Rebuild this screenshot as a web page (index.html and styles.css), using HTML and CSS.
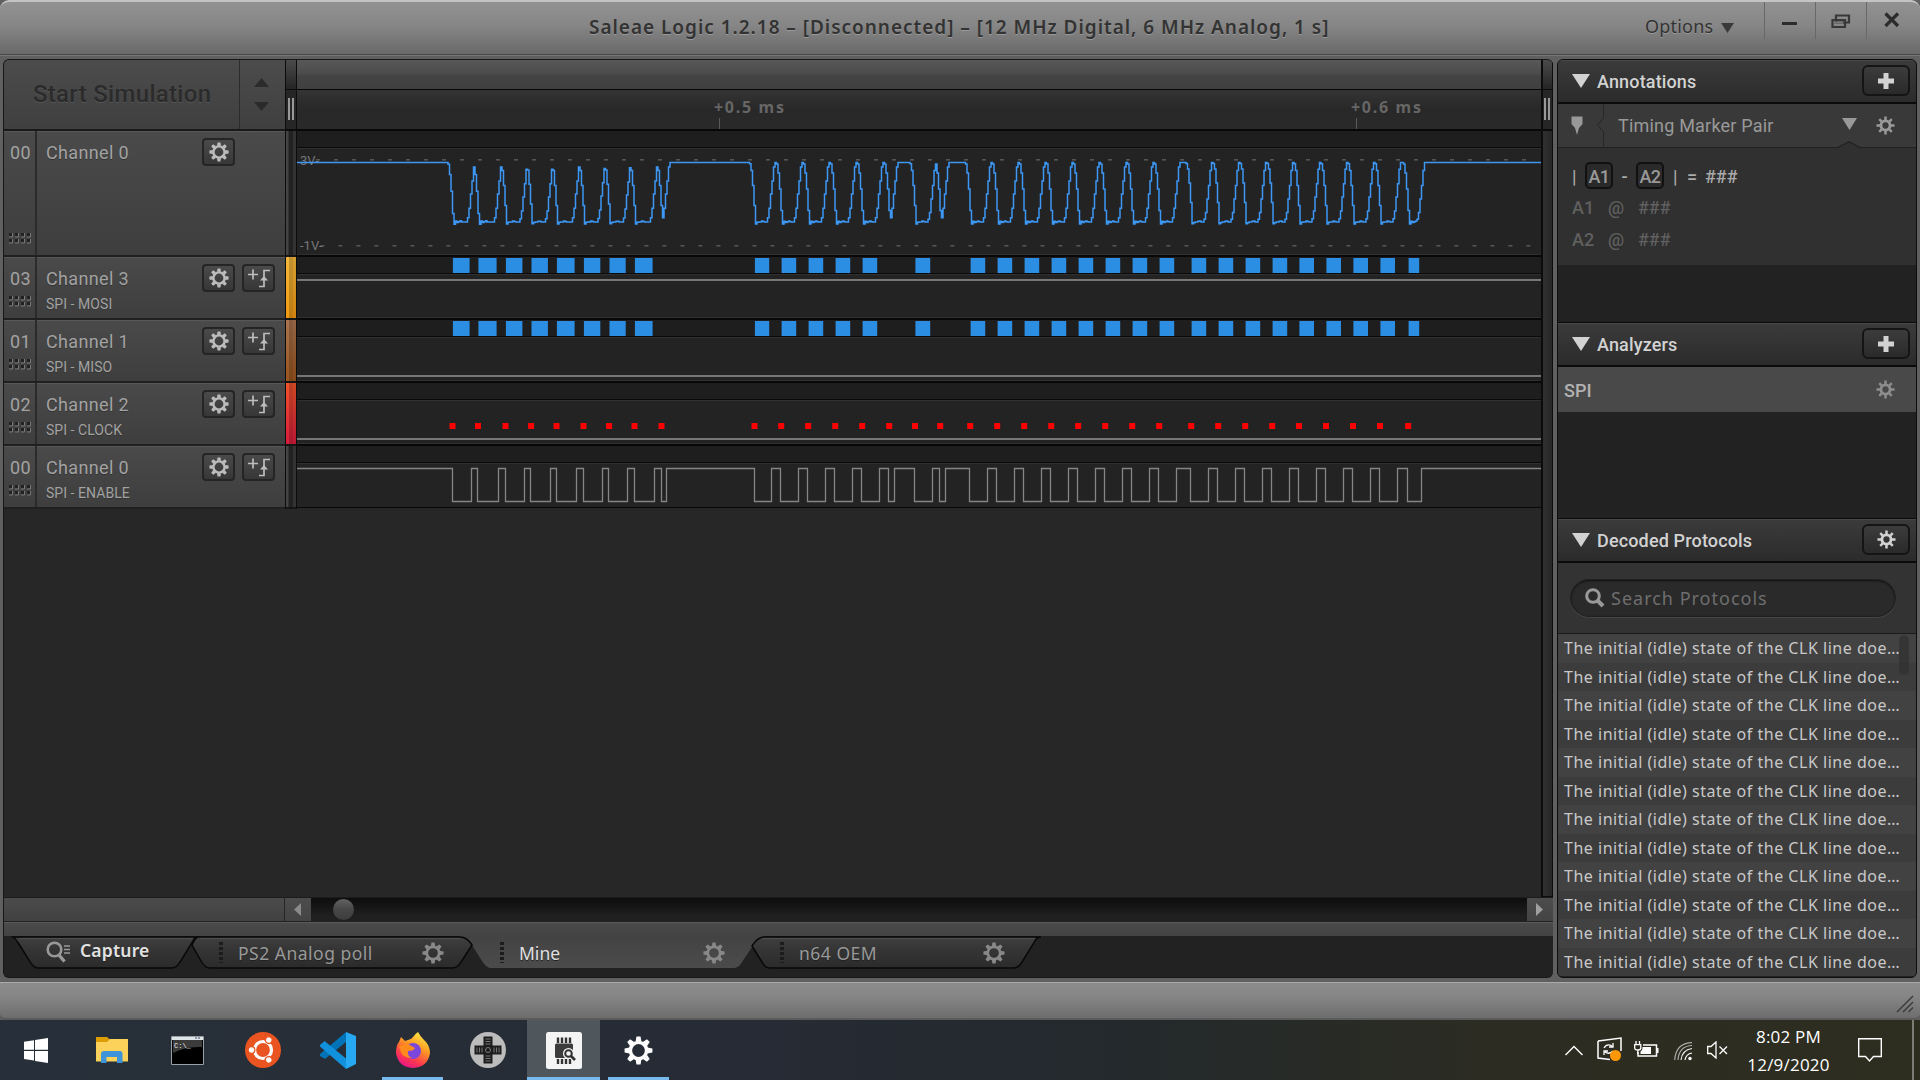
FILE: index.html
```html
<!DOCTYPE html>
<html lang="en">
<head>
<meta charset="utf-8">
<title>Saleae Logic 1.2.18</title>
<link rel="stylesheet" href="styles.css">
</head>
<body>
<svg class="defs" width="0" height="0">
  <defs>
    <symbol id="gear" viewBox="-10 -10 20 20">
      <circle r="5.6" fill="none" stroke="currentColor" stroke-width="2.4"/>
      <g fill="currentColor">
        <path id="tooth" d="M-2-6.2L-1.4-9.6H1.4L2-6.2Z"/>
        <use href="#tooth" transform="rotate(45)"/><use href="#tooth" transform="rotate(90)"/>
        <use href="#tooth" transform="rotate(135)"/><use href="#tooth" transform="rotate(180)"/>
        <use href="#tooth" transform="rotate(225)"/><use href="#tooth" transform="rotate(270)"/>
        <use href="#tooth" transform="rotate(315)"/>
      </g>
    </symbol>
    <symbol id="cog" viewBox="-10 -10 20 20">
      <circle r="4.8" fill="none" stroke="currentColor" stroke-width="3"/>
      <g stroke="currentColor" stroke-width="2.6"><path d="M0-9.5V-5M0 9.5V5M-9.5 0H-5M9.5 0H5M-6.6-6.6L-4-4M6.6-6.6L4-4M-6.6 6.6L-4 4M6.6 6.6L4 4"/></g>
    </symbol>
    <symbol id="trigger" viewBox="0 0 24 20">
      <path d="M1 6.5H11M6 1.5V11.500M12 18.500H17V2.500H23" fill="none" stroke="currentColor" stroke-width="1.700"/>
      <path d="M13 12.500L17 8L21 12.500Z" fill="currentColor"/>
    </symbol>
    <symbol id="plus" viewBox="0 0 18 18"><path d="M6.500 1H11.500V6.500H17V11.500H11.500V17H6.500V11.500H1V6.500H6.500Z" fill="currentColor"/></symbol>
    <symbol id="down" viewBox="0 0 18 14"><path d="M0 0H18L9 14Z" fill="currentColor"/></symbol>
  </defs>
</svg>

<header class="titlebar">
  <h1 class="title">Saleae Logic 1.2.18 – [Disconnected] – [12 MHz Digital, 6 MHz Analog, 1 s]</h1>
  <div class="options">Options <svg width="13" height="9"><use href="#down"/></svg></div>
  <div class="winbtn"><svg width="16" height="24"><path d="M0 19.500H15" stroke="#2c2c2c" stroke-width="3"/></svg></div>
  <div class="winbtn"><svg width="20" height="18"><path d="M5 1.500H18V8.500H5ZM1.500 6H14V13H1.500Z" fill="none" stroke="#383838" stroke-width="2.200"/><path d="M3 8.500H12" stroke="#777" stroke-width="2"/></svg></div>
  <div class="winbtn"><svg width="16" height="16"><path d="M1.500 1.500L14 14M14 1.500L1.500 14" stroke="#2c2c2c" stroke-width="3.200"/></svg></div>
</header>

<main class="workspace">
  <section class="capture">
    <div class="scope">
      <aside class="channels">
        <div class="start">
          <div class="start-label">Start Simulation</div>
          <div class="spin">
            <svg width="15" height="41"><path d="M0 9L7.500 0L15 9ZM0 24H15L7.500 33Z" fill="#2b2b2b"/></svg>
          </div>
        </div>
        <div id="channels"></div>
      </aside>
      <div class="splitter">
        <i class="cap"></i><i class="grip"></i><i class="bar tall"></i>
        <i class="bar c3"></i><i class="bar c1"></i><i class="bar c2"></i><i class="bar c0"></i>
      </div>
      <div class="plot">
        <div class="overview"></div>
        <div class="ruler"><span>+0.5 ms</span><span>+0.6 ms</span></div>
        <div id="lanes"></div>
      </div>
      <div class="vscroll"><i class="cap"></i><i class="grip"></i><i class="rest"></i></div>
    </div>
    <div class="hscroll">
      <div class="hs-left"></div>
      <div class="hs-btn"><svg width="8" height="14"><path d="M7 0V13L0 6.500Z" fill="#8a8a8a"/></svg></div>
      <div class="hs-track"><i></i></div>
      <div class="hs-btn right"><svg width="8" height="14"><path d="M0 0V13L7 6.500Z" fill="#a0a0a0"/></svg></div>
    </div>
    <div class="shelf"></div>
    <nav class="tabs">
      <svg class="tab-shapes" viewBox="4 936 1549 41" width="1549" height="41">
        <defs>
          <linearGradient id="tabfill" x1="0" y1="0" x2="0" y2="1"><stop offset="0" stop-color="#3f3f3f"/><stop offset=".4" stop-color="#353535"/><stop offset="1" stop-color="#2b2b2b"/></linearGradient>
          <linearGradient id="activefill" x1="0" y1="0" x2="0" y2="1"><stop offset="0" stop-color="#434343"/><stop offset="1" stop-color="#4b4b4b"/></linearGradient>
        </defs>
        <path d="M458 936H766Q758 938 754 944L742 962Q739 968 733 968H490Q486 967 482 961L472 945Q467 937 458 936Z" fill="url(#activefill)"/>
        <g stroke="#080808" stroke-width="1.500" fill="url(#tabfill)">
          <path d="M13 937Q16 939 19 944L29 960Q33 968 38 968H171Q177 968 180 962L193 941Q195 937 198 937Z"/>
          <path d="M198 937Q195 938 192 945L201 961Q205 968 210 968H452Q458 968 461 962L472 945Q467 937 460 937Z"/>
          <path d="M763 937Q757 938 752 946L762 962Q765 968 770 968H1013Q1019 968 1022 962L1035 941Q1037 937 1041 937Z"/>
        </g>
        <path d="M20 938.500H192M200 938.500H460M763 938.500H1034" stroke="#505050"/>
      </svg>
      <div class="tab first"><svg width="26" height="22"><circle cx="8.500" cy="8.500" r="6.800" fill="none" stroke="#999" stroke-width="2.600"/><path d="M12.500 13.500L18.500 20.500" stroke="#999" stroke-width="3.400"/><path d="M18 5H24M18 8.500H24M18 12H24" stroke="#999" stroke-width="1.300"/></svg><b>Capture</b></div>
      <div class="tab ps2"><i class="dots"></i><span>PS2 Analog poll</span><svg width="22" height="22"><use href="#gear"/></svg></div>
      <div class="tab mine"><i class="dots"></i><span>Mine</span><svg width="22" height="22"><use href="#gear"/></svg></div>
      <div class="tab n64"><i class="dots"></i><span>n64 OEM</span><svg width="22" height="22"><use href="#gear"/></svg></div>
    </nav>
  </section>

  <aside class="side">
    <div class="head"><svg width="18" height="14"><use href="#down"/></svg><h2>Annotations</h2><div class="btn"><svg width="18" height="18"><use href="#plus"/></svg></div></div>
    <div class="marker-bar">
      <svg width="54" height="43"><path d="M13.500 12.500H24.500V20L21 24L19 31L17 24L13.500 20Z" fill="#999"/><path d="M45.500 0V14L39.500 21L45.500 28V43" fill="none" stroke="#272727"/></svg>
      <span>Timing Marker Pair</span>
      <svg class="mtri" width="15" height="12" viewBox="0 0 18 14" preserveAspectRatio="none"><use href="#down"/></svg>
      <svg class="mcog" width="19" height="19"><use href="#cog"/></svg>
    </div>
    <div class="marker-body">
      <svg class="notch" width="24" height="8"><path d="M0 7.500L12 .5L24 7.500V8H0Z" fill="#303030"/><path d="M0 7L12 .8L24 7" fill="none" stroke="#222" stroke-width="1.200"/></svg>
      <p class="delta"><span>|</span><kbd>A1</kbd><span>-</span><kbd>A2</kbd><span>|</span><span class="eq">=</span><span>###</span></p>
      <p class="pos"><span>A1</span><span>@</span><span>###</span></p>
      <p class="pos"><span>A2</span><span>@</span><span>###</span></p>
    </div>
    <div class="void"></div>
    <div class="head"><svg width="18" height="14"><use href="#down"/></svg><h2>Analyzers</h2><div class="btn"><svg width="18" height="18"><use href="#plus"/></svg></div></div>
    <div class="spi"><span>SPI</span><svg width="19" height="19"><use href="#cog"/></svg></div>
    <div class="void two"></div>
    <div class="head"><svg width="18" height="14"><use href="#down"/></svg><h2>Decoded Protocols</h2><div class="btn"><svg width="19" height="19"><use href="#cog"/></svg></div></div>
    <div class="search"><div class="pill"><svg width="20" height="20"><circle cx="8" cy="8" r="6.300" fill="none" stroke="#999" stroke-width="3"/><path d="M12.500 12.500L18 18" stroke="#999" stroke-width="4"/></svg>Search Protocols</div></div>
    <div class="list"><ul id="protocols"></ul><i class="thumb"></i></div>
  </aside>
</main>

<footer class="status"><svg width="18" height="18"><path d="M1 17L17 1M7 17L17 7M12.500 17L17 12.500" stroke="#3c3c3c" stroke-width="1.500"/></svg></footer>

<div class="taskbar">
  <div class="app start-app"><svg width="24" height="25"><path d="M0 3.700L10 2.200V11.700H0ZM11 2L24 0V11.700H11ZM0 13H10V22.500L0 21ZM11 13H24V25L11 23Z" fill="#fff"/></svg></div>
  <div class="app"><svg width="33" height="28"><path d="M0 1H11L14 3.500V8H0Z" fill="#dd9d05"/><path d="M0 6H11L14 3H32V25.500H0Z" fill="#fcd25a"/><path d="M5 27V18Q5 15 8 15H24Q26.500 15 26.500 18V27H21V21H10.500V27Z" fill="#3d94d8"/></svg></div>
  <div class="app"><svg width="33" height="29"><path d="M.5.500H32.500V28.500H.5Z" fill="#000" stroke="#98a0a5"/><path d="M1 1H32V4H1Z" fill="#dfe6ea"/><path d="M2 4H31V11Q15 10 2 17Z" fill="#3b3b3b"/><path d="M24 2H26M27 2H29" stroke="#446"/><text x="3" y="11.500" class="cmd">C:\_</text></svg></div>
  <div class="app"><svg width="36" height="36" viewBox="-18 -18 36 36"><circle r="18" fill="#e95420"/><circle r="8.500" fill="none" stroke="#fff" stroke-width="3.200"/><g id="friend"><circle cx="-11.500" r="4" fill="#e95420"/><circle cx="-11.500" r="2.700" fill="#fff"/></g><use href="#friend" transform="rotate(120)"/><use href="#friend" transform="rotate(240)"/></svg></div>
  <div class="app"><svg width="36" height="37"><path d="M26 0L36 4V32L26 37Z" fill="#27a9f1"/><path d="M26 0V10L5 27L0 24V22Z" fill="#0072b8"/><path d="M0 13L4.500 9L26 26.500V37L0 14.500Z" fill="#1190dc"/></svg></div>
  <div class="app run"><svg width="36" height="37" viewBox="0 0 36 37">
    <defs><linearGradient id="fox" x1=".8" y1="0" x2=".3" y2="1"><stop offset="0" stop-color="#fff14b"/><stop offset=".4" stop-color="#ff9a22"/><stop offset=".75" stop-color="#ff3750"/><stop offset="1" stop-color="#e2158b"/></linearGradient></defs>
    <path d="M6 5L10 9L13 8Q17 7 18 5Q20 2 23 0Q25 4 29 8L31 10Q35 15 35 21Q33 35 18 36Q3 35 1 21Q1 13 4 10Z" fill="url(#fox)"/><circle cx="18" cy="19" r="8" fill="#7a46dc"/><path d="M4 15Q6 12 13 12L20 16Q19 19 13 19Q12 24 17 26Q6 26 5 17Z" fill="#ff8b1d"/></svg></div>
  <div class="app"><svg width="36" height="36" viewBox="-18 -18 36 36"><circle r="18" fill="#bcbcbc"/><path d="M-4.500-13.500H4.500V-4.500H13.500V4.500H4.500V13.500H-4.500V4.500H-13.500V-4.500H-4.500Z" fill="#1d1d1d"/><path d="M-2.500-11H2.500M-2.500-8.500H2.500M-2.500-6H2.500M-2.500 11H2.500M-2.500 8.500H2.500M-2.500 6H2.500M-11-2.500V2.500M-8.500-2.500V2.500M-6-2.500V2.500M11-2.500V2.500M8.500-2.500V2.500M6-2.500V2.500" stroke="#777"/><circle r="2.500" fill="none" stroke="#777"/></svg></div>
  <div class="app run on"><svg width="36" height="37"><rect width="36" height="37" rx="2.500" fill="#f4f4f4"/><path d="M12 5.500V11M16 5.500V11M20 5.500V11M24 5.500V11M12 27V32M16 27V32M20 27V32M24 27V32" stroke="#333" stroke-width="2.400"/><rect x="9" y="11.500" width="18" height="14.500" rx="1.500" fill="#3c3c3c"/><circle cx="22.500" cy="21.500" r="5.500" fill="#f4f4f4"/><path d="M25 24L29 28" stroke="#f4f4f4" stroke-width="5"/><circle cx="22.500" cy="21.500" r="3.300" fill="#f4f4f4" stroke="#333" stroke-width="2"/><path d="M25 24L29 28" stroke="#333" stroke-width="2.600"/></svg></div>
  <div class="app run last"><svg width="29" height="29"><use href="#gear"/></svg></div>
  <div class="tray">
    <svg width="18" height="11"><path d="M.5 10L9 1.500L17.500 10" fill="none" stroke="#fff" stroke-width="1.400"/></svg>
    <svg class="upd" width="26" height="26"><path d="M1 4L24 1V14M1 4V21L13 22.500" fill="none" stroke="#fff" stroke-width="1.500"/><path d="M7 11Q10 6 15 9M16 6V10H12M16 14Q12 18 8 15M7 18V14H11" fill="none" stroke="#fff" stroke-width="1.300"/><circle cx="18.500" cy="18.500" r="5.500" fill="#ff9800"/></svg>
    <svg class="bat" width="25" height="18"><path d="M9 4H22.500V15H4V11" fill="none" stroke="#fff" stroke-width="1.500"/><path d="M8.500 6H17V13H6.500V10.500Q8.500 9.500 8.500 7ZM23 7H24.500V12H23Z" fill="#fff"/><path d="M2 0V4M5.500 0V4M.7 3.700H6.800V7Q6.800 9 3.800 9Q.7 9 .7 7ZM3.800 9V13" stroke="#fff" stroke-width="1.300" fill="none"/></svg>
    <svg class="wifi" width="19" height="19"><g fill="none" stroke="#fff" stroke-width="1.200"><path d="M11 18Q12 12 18 11"/><path d="M7 18Q8 8 18 6.500" opacity=".9"/><path d="M4 18Q5 4 18 3.500" opacity=".6"/><path d="M.7 18Q2 1 18 .7" opacity=".6"/></g><circle cx="16" cy="16.500" r="1.700" fill="#fff"/></svg>
    <svg class="snd" width="22" height="18"><path d="M.7 5.500H4L9 1V17L4 12.500H.7ZM12.500 5.500L20 13M20 5.500L12.500 13" fill="none" stroke="#fff" stroke-width="1.300"/></svg>
    <div class="clock"><span>8:02 PM</span><span>12/9/2020</span></div>
    <svg class="note" width="24" height="25"><path d="M.7.700H23.300V18.500H15.500L11.500 23L7.500 18.500H.7Z" fill="none" stroke="#fff" stroke-width="1.400"/></svg>
    <i class="peek"></i>
  </div>
</div>
<script src="app.js"></script>
</body>
</html>
```
FILE: styles.css
```css
* { box-sizing: border-box; }
body { margin: 0; width: 1920px; height: 1080px; overflow: hidden; display: flex; flex-direction: column; background: #606060; font-family: Roboto, "Liberation Sans", sans-serif; color: #a2a2a2; }
h1, h2, p, ul { margin: 0; padding: 0; font-weight: 500; list-style: none; }
svg { display: block; flex: none; }
.defs { position: absolute; }

.titlebar { height: 55px; flex: none; display: flex; border-top: 2px solid #c4c4c4; border-bottom: 1px solid #484848; border-radius: 9px 9px 0 0; background: linear-gradient(#929293, #868686 45%, #696969); }
.title { width: 1634px; flex: none; padding: 13px 0 0 589px; font: 600 19px/24px "Noto Sans", sans-serif; color: #333; white-space: nowrap; letter-spacing: .97px; text-shadow: 0 1px #999; }
.options { width: 130px; padding-top: 12px; padding-left: 11px; display: flex; gap: 8px; font: 18px/24px "Noto Sans", sans-serif; letter-spacing: .2px; color: #333; white-space: nowrap; text-shadow: 0 1px #999; }
.options svg { margin-top: 9px; color: #3a3a3a; width: 13px; height: 10px; }
.winbtn { width: 51px; height: 37px; border-left: 1px solid #686868; display: flex; justify-content: center; }
.winbtn:nth-of-type(2) svg { margin-top: 2px; }
.winbtn:nth-of-type(3) svg { margin-top: 12px; }
.winbtn:nth-of-type(4) svg { margin-top: 10px; }

.workspace { height: 927px; flex: none; display: flex; gap: 4px; padding: 3px 3px 5px; background: #606060; border-top: 1px solid #777; }
.capture { width: 1550px; height: 919px; overflow: hidden; border: 1px solid #171717; border-right: 0; border-radius: 6px; background: #272727; display: flex; flex-direction: column; }
.scope { height: 837px; flex: none; display: flex; background: #272727; }
.channels { width: 281px; height: 449px; flex: none; }
.start { height: 71px; display: flex; background: linear-gradient(#4c4c4c, #3f3f3f); border-bottom: 2px solid #191919; }
.start-label { width: 236px; padding: 20px 0 0 29px; font-size: 24px; line-height: 28px; font-weight: 500; letter-spacing: .3px; color: #2b2b2b; text-shadow: 0 1px #555; border-right: 1px solid #2c2c2c; white-space: nowrap; }
.spin { flex: 1; display: flex; justify-content: center; padding: 18px 2px 0 0; }
.chan { height: 63px; display: grid; grid-template-columns: 33px 165px 33px 7px 34px; background: linear-gradient(#4a4a4a, #3e3e3e); border-bottom: 2px solid #202020; box-shadow: inset 0 1px #585858; }
.chan.tall { height: 126px; }
.num { border-right: 2px solid #2b2b2b; display: flex; flex-direction: column; justify-content: space-between; align-items: center; padding: 10px 0 11px 2px; font-size: 18px; line-height: 24px; letter-spacing: .3px; }
.name { padding: 10px 0 0 9px; font-size: 18px; line-height: 24px; letter-spacing: .35px; text-shadow: 0 1px #333; white-space: nowrap; }
.name small { display: block; font-size: 14px; line-height: 20px; padding-top: 3px; letter-spacing: .05px; }
.key { width: 33px; height: 28px; margin-top: 7px; border: 2px solid #252525; border-radius: 4px; background: linear-gradient(#4a4a4a, #373737); display: flex; justify-content: center; align-items: center; color: #bdbdbd; }
.key + .key { grid-column: 5; }

.splitter { width: 12px; height: 449px; display: flex; flex-direction: column; background: #0c0c0c; padding: 0 1px; flex: none; overflow: hidden; }
.splitter i, .vscroll i { flex-shrink: 0; }
.cap { height: 29px; background: linear-gradient(#4a4a4a, #252525); }
.grip { height: 39px; margin-top: 1px; background: linear-gradient(90deg, transparent 2px, #999 2px 4px, transparent 4px 6px, #999 6px 8px, transparent 8px) no-repeat 0 8px / 10px 22px, #262626; }
.vscroll .grip { background-position: -1px 8px, 0 0; }
.bar { height: 63px; border-bottom: 2px solid #151515; background: linear-gradient(90deg, #444 2px, #222 3px 7px, #333 7px); }
.bar.tall { height: 126px; margin-top: 2px; }
.bar.c3 { background: linear-gradient(90deg, transparent 3px, #0003 3px 7px, #0002 7px), linear-gradient(#f3b73c, #f19a10); }
.bar.c1 { background: linear-gradient(90deg, transparent 3px, #0003 3px 7px, #0002 7px), linear-gradient(#a9744f, #9b541d); }
.bar.c2 { background: linear-gradient(90deg, transparent 3px, #0003 3px 7px, #0002 7px), linear-gradient(#f0532a, #d81b3c); }

.plot { width: 1244px; flex: none; }
.overview { height: 29px; background: linear-gradient(#585858, #4c4c4c 48%, #444 52%, #404040); }
.ruler { height: 40px; border-top: 1px solid #050505; background: linear-gradient(#343434, #282828 50%, #2a2a2a); display: flex; padding-left: 417px; }
.ruler span { width: 637px; flex: none; padding-top: 8px; font: 700 16px/18px "Noto Sans", sans-serif; letter-spacing: 1.700px; color: #666; background: linear-gradient(#5a5a5a, #5a5a5a) no-repeat 5px 28px / 1px 11px; white-space: nowrap; }
.ruler span:last-child { width: 190px; }
#lanes text { font: 13px Roboto, sans-serif; fill: #777; }
.vscroll { width: 12px; flex: none; border: 1px solid #0c0c0c; border-width: 0 1px 1px 2px; display: flex; flex-direction: column; background: #0c0c0c; }
.vscroll .rest { flex: 1; margin-top: 2px; background: linear-gradient(90deg, #303030, #272727); }

.hscroll { height: 25px; flex: none; display: flex; border-top: 1px solid #1c1c1c; border-bottom: 1px solid #222; background: #181818; }
.hs-left { width: 281px; background: linear-gradient(#4b4b4b, #414141); border-right: 1px solid #262626; }
.hs-btn { width: 26px; display: flex; align-items: center; justify-content: center; background: linear-gradient(#4c4c4c, #444); }
.hs-track { flex: 1; padding: 1px 0 0 22px; background: linear-gradient(#0d0d0d, #202020 80%); }
.hs-track i { display: block; width: 21px; height: 21px; border-radius: 50%; background: linear-gradient(#626262, #474747 50%, #3c3c3c); }
.shelf { height: 14px; flex: none; background: linear-gradient(#4a4a4a, #434343); border-top: 1px solid #5a5a5a; }
.tabs { position: relative; height: 41px; flex: none; display: flex; background: #222; }
.tab-shapes { position: absolute; left: 0; top: 0; }
.tab { position: relative; display: flex; align-items: center; height: 34px; font: 17.500px "Noto Sans", sans-serif; color: #999; white-space: nowrap; text-shadow: 0 1px #222; }
.tab > svg:last-child { color: #888; margin-top: -1px; }
.tab.first { width: 188px; padding-left: 42px; gap: 8px; padding-bottom: 2px; }
.tab.first b { font-weight: 600; color: #e2e2e2; letter-spacing: .2px; margin-top: -5px; }
.dots { width: 4px; height: 21px; margin-top: -2px; background: repeating-linear-gradient(#1c1c1c 0 3px, transparent 3px 5px); }
.ps2 { width: 281px; padding-left: 27px; }
.ps2 span, .mine span, .n64 span { margin-left: 15px; width: 184px; letter-spacing: .5px; }
.mine { width: 280px; padding-left: 27px; color: #e0e0e0; }
.mine span { letter-spacing: 0; }
.n64 { padding-left: 27px; }

.side { width: 360px; height: 919px; overflow: hidden; border: 1px solid #0e0e0e; border-radius: 6px; background: #222; }
.head { height: 44px; display: flex; border-bottom: 2px solid #0b0b0b; background: linear-gradient(#3b3b3b, #2b2b2b); color: #d2d2d2; padding-left: 14px; box-shadow: inset 0 1px #484848; }
.head > svg { margin-top: 14px; }
.head h2 { flex: 1; padding: 10px 0 0 7px; font-size: 18px; line-height: 24px; letter-spacing: .15px; }
.btn { width: 48px; height: 31px; margin: 5px 6px 0 0; border: 2px solid #151515; border-radius: 6px; background: linear-gradient(#3c3c3c, #2a2a2a); display: flex; justify-content: center; align-items: center; }
.marker-bar { height: 43px; display: flex; align-items: center; background: #393939; color: #999; font-size: 18px; letter-spacing: .2px; }
.marker-bar span { width: 230px; padding-left: 6px; white-space: nowrap; }
.marker-bar .mtri { margin-top: -3px; width: 15px; height: 12px; }
.mcog { margin-left: 19px; }
.marker-body { position: relative; height: 118px; border-top: 1px solid #212121; background: #303030; font-size: 18px; padding-left: 14px; }
.notch { position: absolute; right: 55px; top: -7px; }
.delta { display: flex; height: 47px; padding-top: 14px; line-height: 29px; color: #aaa; white-space: nowrap; }
.delta span:first-child { width: 13px; }
.delta kbd { font: inherit; width: 28px; height: 27px; border: 2px solid #111; border-radius: 5px; text-align: center; line-height: 26px; background: #2a2a2a; letter-spacing: -.5px; color: #999; }
.delta span:nth-child(3) { width: 23px; text-align: center; }
.delta span:nth-child(5) { padding-left: 9px; width: 23px; }
.delta .eq { width: 18px; }
.pos { display: grid; grid-template-columns: 36px 30px auto; height: 31.500px; line-height: 26px; color: #5f5f5f; }
.void { height: 58px; background: #222; border-bottom: 1px solid #0b0b0b; }
.void.two { height: 107px; }
.spi { height: 45px; display: flex; justify-content: space-between; align-items: center; padding: 2px 21px 0 6px; background: #494949; color: #b2b2b2; font-size: 18px; font-weight: 500; }
.spi svg { color: #8d8d8d; margin-top: -2px; }
.search { height: 70px; padding: 16px 0 0 12px; background: #333; }
.pill { width: 326px; height: 38px; border-radius: 19px; border: 1px solid #202020; box-shadow: inset 0 1px 2px #111, 0 1px #454545; background: #2a2a2a; display: flex; align-items: center; gap: 6px; padding-left: 14px; font: 18px "Noto Sans", sans-serif; letter-spacing: 1px; color: #6e6e6e; }
.list { position: relative; border-top: 1px solid #1a1a1a; height: 346px; overflow: hidden; }
.list li { height: 28.500px; background: #424242; padding: 0 0 0 6px; color: #c8c8c8; font: 16px/28px "Noto Sans", sans-serif; letter-spacing: .52px; white-space: nowrap; }
.list li:nth-child(even) { background: #3c3c3c; }
.thumb { position: absolute; right: 7px; top: 1px; width: 10px; height: 40px; border-radius: 5px; background: #2c2c2c88; }

.status { height: 38px; flex: none; border-top: 1px solid #aaa; border-bottom: 2px solid #5b5b5b; border-radius: 0 0 6px 6px; background: linear-gradient(#8d8d8e, #858585 40%, #6d6d6d); display: flex; justify-content: flex-end; padding: 12px 6px 0 0; }
.taskbar { height: 60px; flex: none; display: flex; background: linear-gradient(90deg, #27303a, #262b35 40%, #23292c 58%, #2c2c22 78%, #2d2d20); }
.app { width: 75px; height: 60px; flex: none; display: flex; align-items: center; justify-content: center; }
.app.start-app { padding-right: 3px; }
.cmd { font: 7px "Liberation Mono", monospace; fill: #eee; }
.run { background: linear-gradient(#76b9ed, #76b9ed) no-repeat 50% 100% / 61px 3px; }
.run.on { width: 73px; margin-left: 2px; background: linear-gradient(#76b9ed, #76b9ed) no-repeat 0 100% / 100% 3px, #50575c; }
.last { width: 77px; color: #fff; }
.tray { margin-left: auto; display: flex; align-items: center; color: #fff; }
.upd { margin-left: 14px; }
.bat { margin-left: 11px; }
.wifi { margin: 3px 0 0 15px; }
.snd { margin-left: 14px; }
.clock { width: 121px; display: flex; flex-direction: column; align-items: center; padding: 2px 2px 0 0; font: 17px/28px "Open Sans", sans-serif; letter-spacing: .2px; }
.note { margin-left: 8px; }
.peek { width: 2px; height: 60px; margin: 0 6px 0 30px; background: #7d7d76; }
```
FILE: app.js
```js
const channels = [
  ["00", "Channel 0", ""],
  ["03", "Channel 3", "SPI - MOSI"],
  ["01", "Channel 1", "SPI - MISO"],
  ["02", "Channel 2", "SPI - CLOCK"],
  ["00", "Channel 0", "SPI - ENABLE"],
];

let grip = "";
for (let r = 0; r < 2; r++) for (let c = 0; c < 4; c++) {
  grip += `<rect x="${c * 6}" y="${r * 6}" width="3" height="3" fill="#222"/><path d="M${c * 6} ${r * 6 + 4}H${c * 6 + 3.5}V${r * 6}" fill="none" stroke="#777"/>`;
}
document.getElementById("channels").innerHTML = channels.map(([num, name, role]) => `
  <div class="chan ${role ? "" : "tall"}">
    <div class="num"><span>${num}</span><svg width="23" height="11">${grip}</svg></div>
    <div class="name">${name}<small>${role}</small></div>
    <div class="key"><svg width="20" height="20"><use href="#gear"/></svg></div>
    ${role ? '<div class="key"><svg width="24" height="20"><use href="#trigger"/></svg></div>' : ""}
  </div>`).join("");

// Low pulses of the enable line: falling edge, rising edge.
const lows = [
  [452, 471.7], [477.5, 498.7], [505, 524.5], [530.6, 550], [556, 576.7], [583, 602.4], [608.6, 627.8], [634, 654.7], [661, 666.7],
  [754, 771.7], [780.7, 798.7], [807.7, 825.7], [834.7, 852.7], [861.7, 879.7], [888.7, 894.7], [914.5, 932.7], [939.7, 945.7],
  [969.7, 987.7], [996.7, 1014.7], [1023.7, 1041.7], [1050.7, 1068.7], [1077.7, 1095.7], [1104.7, 1122.7], [1131.7, 1149.7],
  [1158.7, 1176.7], [1190.7, 1208.7], [1217.7, 1235.7], [1244.7, 1262.7], [1271.7, 1289.7], [1298.5, 1316.5], [1325.5, 1343.5],
  [1352.5, 1370.5], [1379.5, 1397.5], [1407.7, 1421.7],
];
const L = 297, R = 1541;
const snap = v => Math.floor(v) + 0.5;

const interp = (table, t) => {
  if (t <= table[0][0]) return table[0][1];
  for (let i = 1; i < table.length; i++) {
    const [x0, y0] = table[i - 1], [x1, y1] = table[i];
    if (t <= x1) return y0 + (y1 - y0) * (t - x0) / (x1 - x0);
  }
  return table[table.length - 1][1];
};
const fall = [[-5, 162.5], [-3.2, 164.5], [-1.7, 176], [0, 196], [1, 212], [1.7, 223.5], [2.8, 224.5], [4, 221], [5.5, 222.5], [7.5, 221.5], [9, 220.5], [10, 222]];
const rise = [[-6, 226], [-4.5, 220.5], [-3, 216], [-1.6, 204], [-0.5, 193], [0.8, 182], [1.7, 172], [2.7, 165], [3.2, 162.5]];
const volts = x => Math.max(162.5, ...lows.map(([a, b]) => Math.min(interp(fall, x - a), interp(rise, x - b))));

let analog = `M${L} 162.500`;
for (let x = L + 1; x < R; x += 1.5) analog += `H${x}V${volts(x + 0.6).toFixed(1)}`;
analog += `H${R}`;

let digital = `M${L} 468.500`;
lows.forEach(([a, b]) => { digital += `H${snap(a)}V501.500H${snap(b)}V468.500`; });
digital += `H${R}`;

const rect = (x, y, w, h, fill) => `<rect x="${x}" y="${y}" width="${w}" height="${h}" fill="${fill}"/>`;
const dots = (from, y) => {
  let s = "";
  for (let x = from; x < R - 8; x += 18) s += rect(x - 2, y, 4, 1.6, "#555");
  return s;
};
const blocks = y => lows.filter(([a, b]) => b - a > 8).map(([a, b]) =>
  rect((a + 0.9).toFixed(1), y, (b - a - (b < 700 ? 3 : 3.4)).toFixed(1), 15, "#2b8ee2")).join("");
const frame = (top, bottom) =>
  rect(L, top, R - L, bottom - top, "#232323") + rect(L, top + 2, R - L, 16, "#1e1e1e") +
  rect(L, top, R - L, 2, "#080808") + rect(L, top + 18, R - L, 1, "#0a0a0a") + rect(L, top + 19, R - L, 1, "#303030") +
  rect(L, bottom - 1, R - L, 1, "#303030");
const lane = (top, bottom, inner) =>
  `<svg width="${R - L}" height="${bottom - top}" viewBox="${L} ${top} ${R - L} ${bottom - top}">${frame(top, bottom)}${inner}</svg>`;
const flat = y => rect(L, y, R - L, 2, "#777");

document.getElementById("lanes").innerHTML =
  lane(129, 255, dots(318, 159) + dots(322.4, 245) +
    `<text x="300" y="165">3V-</text><text x="300" y="250">-1V-</text><path d="${analog}" fill="none" stroke="#3d97f5" stroke-width="1.500"/>`) +
  lane(255, 318, blocks(258) + flat(279)) +
  lane(318, 381, blocks(321) + flat(375)) +
  lane(381, 444, lows.map(([a]) => rect((a - 2.5).toFixed(1), 423, 6, 6, "#f00")).join("") + flat(438)) +
  lane(444, 508, `<path d="${digital}" fill="none" stroke="#858585" stroke-width="1.300"/>` + rect(L, 507, R - L, 1, "#080808"));

document.getElementById("protocols").innerHTML =
  "<li>The initial (idle) state of the CLK line doe…</li>".repeat(12);
```
